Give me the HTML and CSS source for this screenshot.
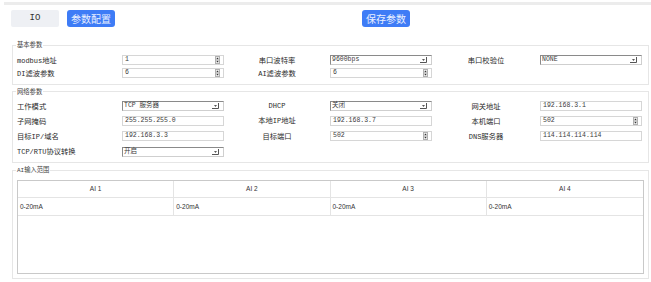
FILE: index.html
```html
<!DOCTYPE html>
<html lang="zh">
<head>
<meta charset="utf-8">
<title>IO 参数配置</title>
<link rel="stylesheet" href="styles.css">
</head>
<body>
<div class="topbar"></div>
<div class="toolbar">
  <div class="tab">IO</div>
  <div class="btn">参数配置</div>
  <div class="btn save">保存参数</div>
</div>

<fieldset class="fs fs1">
  <legend>基本参数</legend>
  <div class="grid g1">
    <div class="lbl"><span class="l">modbus</span>地址</div>
    <div class="fld"><span>1</span><svg class="spin" viewBox="0 0 5 8" width="5" height="8"><rect x=".5" y=".5" width="4" height="7" fill="#ececec" stroke="#b0b0b0"/><path d="M1.2 3.3h2.6L2.5 1.6z M1.2 4.7h2.6L2.5 6.4z" fill="#333"/></svg></div>
    <div class="lbl c">串口波特率</div>
    <div class="fld sel"><span>9600bps</span><svg class="arr" viewBox="0 0 7 6" width="7" height="6"><path d="M0 5.5h6.5V0" stroke="#555" fill="none"/><path d="M2 2.2h3L3.5 3.7z" fill="#222"/></svg></div>
    <div class="lbl c">串口校验位</div>
    <div class="fld sel"><span>NONE</span><svg class="arr" viewBox="0 0 7 6" width="7" height="6"><path d="M0 5.5h6.5V0" stroke="#555" fill="none"/><path d="M2 2.2h3L3.5 3.7z" fill="#222"/></svg></div>

    <div class="lbl"><span class="l">DI</span>滤波参数</div>
    <div class="fld"><span>6</span><svg class="spin" viewBox="0 0 5 8" width="5" height="8"><rect x=".5" y=".5" width="4" height="7" fill="#ececec" stroke="#b0b0b0"/><path d="M1.2 3.3h2.6L2.5 1.6z M1.2 4.7h2.6L2.5 6.4z" fill="#333"/></svg></div>
    <div class="lbl c"><span class="l">AI</span>滤波参数</div>
    <div class="fld"><span>6</span><svg class="spin" viewBox="0 0 5 8" width="5" height="8"><rect x=".5" y=".5" width="4" height="7" fill="#ececec" stroke="#b0b0b0"/><path d="M1.2 3.3h2.6L2.5 1.6z M1.2 4.7h2.6L2.5 6.4z" fill="#333"/></svg></div>
    <div></div>
    <div></div>
  </div>
</fieldset>

<fieldset class="fs fs2">
  <legend>网络参数</legend>
  <div class="grid g2">
    <div class="lbl">工作模式</div>
    <div class="fld sel"><span>TCP 服务器</span><svg class="arr" viewBox="0 0 7 6" width="7" height="6"><path d="M0 5.5h6.5V0" stroke="#555" fill="none"/><path d="M2 2.2h3L3.5 3.7z" fill="#222"/></svg></div>
    <div class="lbl c"><span class="l">DHCP</span></div>
    <div class="fld sel"><span>关闭</span><svg class="arr" viewBox="0 0 7 6" width="7" height="6"><path d="M0 5.5h6.5V0" stroke="#555" fill="none"/><path d="M2 2.2h3L3.5 3.7z" fill="#222"/></svg></div>
    <div class="lbl c">网关地址</div>
    <div class="fld"><span>192.168.3.1</span></div>

    <div class="lbl">子网掩码</div>
    <div class="fld"><span>255.255.255.0</span></div>
    <div class="lbl c">本地<span class="l">IP</span>地址</div>
    <div class="fld"><span>192.168.3.7</span></div>
    <div class="lbl c">本机端口</div>
    <div class="fld"><span>502</span><svg class="spin" viewBox="0 0 5 8" width="5" height="8"><rect x=".5" y=".5" width="4" height="7" fill="#ececec" stroke="#b0b0b0"/><path d="M1.2 3.3h2.6L2.5 1.6z M1.2 4.7h2.6L2.5 6.4z" fill="#333"/></svg></div>

    <div class="lbl">目标<span class="l">IP/</span>域名</div>
    <div class="fld"><span>192.168.3.3</span></div>
    <div class="lbl c">目标端口</div>
    <div class="fld"><span>502</span><svg class="spin" viewBox="0 0 5 8" width="5" height="8"><rect x=".5" y=".5" width="4" height="7" fill="#ececec" stroke="#b0b0b0"/><path d="M1.2 3.3h2.6L2.5 1.6z M1.2 4.7h2.6L2.5 6.4z" fill="#333"/></svg></div>
    <div class="lbl c"><span class="l">DNS</span>服务器</div>
    <div class="fld"><span>114.114.114.114</span></div>

    <div class="lbl"><span class="l">TCP/RTU</span>协议转换</div>
    <div class="fld sel"><span>开启</span><svg class="arr" viewBox="0 0 7 6" width="7" height="6"><path d="M0 5.5h6.5V0" stroke="#555" fill="none"/><path d="M2 2.2h3L3.5 3.7z" fill="#222"/></svg></div>
    <div></div><div></div><div></div><div></div>
  </div>
</fieldset>

<fieldset class="fs fs3">
  <legend><span class="l">AI</span>输入范围</legend>
  <div class="tbl">
    <div class="tr">
      <div class="th">AI 1</div>
      <div class="th">AI 2</div>
      <div class="th">AI 3</div>
      <div class="th">AI 4</div>
    </div>
    <div class="tr">
      <div class="td">0-20mA</div>
      <div class="td">0-20mA</div>
      <div class="td">0-20mA</div>
      <div class="td">0-20mA</div>
    </div>
  </div>
</fieldset>
</body>
</html>
```
FILE: styles.css
```css
html, body {
  margin: 0;
  background: #fff;
}
body {
  font-family: "Liberation Mono", "Noto Sans CJK SC", monospace;
  color: #222;
  width: 651px;
}
.topbar {
  height: 3px;
  margin: 2px 0 0 4px;
  background: #ececec;
}
.toolbar {
  display: flex;
  margin-top: 5px;
  padding-left: 11px;
  height: 17px;
}
.tab {
  width: 48px;
  background: #eef0f4;
  border-radius: 2px;
  font: 9px/17px "Liberation Mono", monospace;
  text-align: center;
  color: #333;
}
.btn {
  width: 48px;
  margin-left: 8px;
  background: #3e7cf6;
  border-radius: 3px;
  color: #e9efff;
  font: 10px/17px "Noto Sans CJK SC", sans-serif;
  text-align: center;
}
.save {
  margin-left: 247px;
}
.fs {
  margin: 14px 0 0 12px;
  width: 637px;
  box-sizing: border-box;
  border: 1px solid #e6e6e6;
  padding: 4.5px 4px 4px 4px;
  min-width: 0;
}
.fs legend {
  font: 6.3px/8px "Noto Sans CJK SC", sans-serif;
  color: #444;
  padding: 0 1px;
  margin-left: -1px;
}
.fs legend .l {
  font-family: "Liberation Mono", monospace;
  font-size: 6px;
}
.fs2 {
  margin-top: 3px;
  padding: 2.5px 4px 3px 4px;
}
.fs3 {
  margin-top: 2.7px;
  padding: 5px 4px 4px 4px;
}
.grid {
  display: grid;
  grid-template-columns: 105px 102px 106px 102px 108px 102px;
  align-items: center;
}
.g1 {
  grid-auto-rows: 13px;
}
.g2 {
  grid-auto-rows: 15.33px;
}
.lbl {
  font: 7.3px/10px "Noto Sans CJK SC", sans-serif;
  color: #2a2a2a;
  white-space: nowrap;
}
.lbl .l {
  font-family: "Liberation Mono", monospace;
  font-size: 7px;
}
.lbl.c {
  text-align: center;
}
.fld {
  height: 10px;
  box-sizing: border-box;
  border: 1px solid #d6d6d6;
  display: flex;
  align-items: center;
  padding: 0 2px 0 2px;
  font: 6.5px/8px "Liberation Mono", "Noto Sans CJK SC", monospace;
  color: #3a3a3a;
  white-space: nowrap;
}
.fld.sel {
  border-color: #8a8a8a #cfcfcf #cfcfcf #8a8a8a;
  padding-left: 1px;
}
.spin {
  margin-left: auto;
  margin-right: 1px;
  flex: none;
}
.arr {
  margin-left: auto;
  margin-right: 2px;
  flex: none;
}
.tbl {
  height: 94px;
  box-sizing: border-box;
  border: 1px solid #c9c9c9;
  font-family: "Liberation Sans", sans-serif;
  font-size: 6.5px;
  color: #333;
}
.tr {
  display: grid;
  grid-template-columns: repeat(4, 1fr);
}
.th, .td {
  border-right: 1px solid #e4e4e4;
  border-bottom: 1px solid #e4e4e4;
}
.th:last-child, .td:last-child {
  border-right: none;
}
.th {
  height: 16px;
  line-height: 16px;
  text-align: center;
}
.td {
  height: 17px;
  line-height: 17px;
  padding-left: 2px;
}
```
